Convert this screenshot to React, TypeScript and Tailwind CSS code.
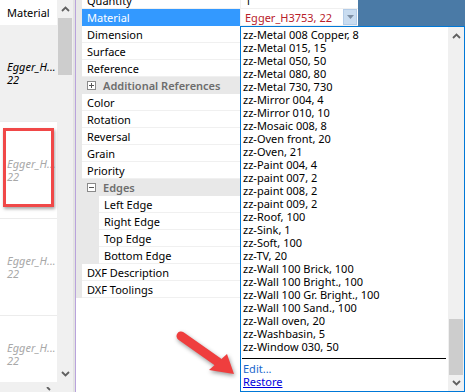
import React from "react";

const items = [
  "zz-Metal 008 Copper, 8",
  "zz-Metal 015, 15",
  "zz-Metal 050, 50",
  "zz-Metal 080, 80",
  "zz-Metal 730, 730",
  "zz-Mirror 004, 4",
  "zz-Mirror 010, 10",
  "zz-Mosaic 008, 8",
  "zz-Oven front, 20",
  "zz-Oven, 21",
  "zz-Paint 004, 4",
  "zz-paint 007, 2",
  "zz-paint 008, 2",
  "zz-paint 009, 2",
  "zz-Roof, 100",
  "zz-Sink, 1",
  "zz-Soft, 100",
  "zz-TV, 20",
  "zz-Wall 100 Brick, 100",
  "zz-Wall 100 Bright., 100",
  "zz-Wall 100 Gr. Bright., 100",
  "zz-Wall 100 Sand., 100",
  "zz-Wall oven, 20",
  "zz-Washbasin, 5",
  "zz-Window 030, 50",
];

type Row =
  | { kind: "item"; label: string; sub?: boolean; selected?: boolean; value?: React.ReactNode }
  | { kind: "cat"; label: string; open: boolean };

const rows: Row[] = [
  { kind: "item", label: "Quantity", value: "1" },
  { kind: "item", label: "Material", selected: true },
  { kind: "item", label: "Dimension" },
  { kind: "item", label: "Surface" },
  { kind: "item", label: "Reference" },
  { kind: "cat", label: "Additional References", open: false },
  { kind: "item", label: "Color" },
  { kind: "item", label: "Rotation" },
  { kind: "item", label: "Reversal" },
  { kind: "item", label: "Grain" },
  { kind: "item", label: "Priority" },
  { kind: "cat", label: "Edges", open: true },
  { kind: "item", label: "Left Edge", sub: true },
  { kind: "item", label: "Right Edge", sub: true },
  { kind: "item", label: "Top Edge", sub: true },
  { kind: "item", label: "Bottom Edge", sub: true },
  { kind: "item", label: "DXF Description" },
  { kind: "item", label: "DXF Toolings" },
];

function ChevronUp() {
  return (
    <svg width="9" height="6" viewBox="0 0 9 6">
      <path d="M1 5 L4.5 1.5 L8 5" fill="none" stroke="#606060" strokeWidth="1.8" />
    </svg>
  );
}
function ChevronDown() {
  return (
    <svg width="9" height="6" viewBox="0 0 9 6">
      <path d="M1 1 L4.5 4.5 L8 1" fill="none" stroke="#606060" strokeWidth="1.8" />
    </svg>
  );
}

function Cell({ h, bg, color, last }: { h: string; bg: string; color: string; last?: boolean }) {
  return (
    <div className={`${h} ${bg} ${last ? "" : "border-b border-[#ececec]"} flex flex-col justify-center pl-[7px] italic ${color} text-[11px] leading-[13px]`}>
      <span>Egger_H...</span>
      <span>22</span>
    </div>
  );
}

function Box({ minus }: { minus: boolean }) {
  return (
    <div className="w-[9px] h-[9px] border border-[#8a8a8a] bg-white flex items-center justify-center relative">
      <div className="w-[5px] h-[1px] bg-[#555]" />
      {!minus && <div className="absolute w-[1px] h-[5px] bg-[#555]" />}
    </div>
  );
}

export default function App() {
  return (
    <div className="relative w-[465px] h-[392px] overflow-hidden flex bg-white font-['Noto_Sans',sans-serif] text-[11px] text-black leading-[13px]">
      {/* Left panel */}
      <div className="w-[73px] h-full flex flex-col bg-[#f0f0f0]">
        <div className="flex flex-1 min-h-0">
          <div className="w-[57px] flex flex-col">
            <div className="h-[25px] shrink-0 bg-white flex items-center pl-[7px] text-[11px]">Material</div>
            <Cell h="h-[97px]" bg="bg-[#f0f0f0]" color="text-black" />
            <Cell h="h-[97px]" bg="bg-white" color="text-[#a8a8a8]" />
            <Cell h="h-[97px]" bg="bg-white" color="text-[#a8a8a8]" />
            <div className="flex-1 bg-white flex flex-col justify-center pl-[7px] italic text-[#a8a8a8] text-[11px] leading-[13px] pt-[10px]">
              <span>Egger_H...</span>
              <span>22</span>
            </div>
          </div>
          <div className="w-[16px] flex flex-col bg-[#f0f0f0]">
            <div className="h-[18px] flex items-center justify-center"><ChevronUp /></div>
            <div className="h-[57px] mx-[1px] bg-[#cdcdcd]" />
            <div className="flex-1" />
            <div className="h-[17px] flex items-center justify-center"><ChevronDown /></div>
          </div>
        </div>
        <div className="h-[10px] shrink-0 bg-[#f0f0f0] flex">
          <div className="w-[57px] flex items-end justify-end pr-[5px]">
            <svg width="6" height="5" viewBox="0 0 6 5">
              <path d="M1 0 L4 3" fill="none" stroke="#606060" strokeWidth="1.8" />
            </svg>
          </div>
        </div>
      </div>
      <div className="w-[2px] h-full bg-[#e3e3e3]" />
      <div className="w-[1px] h-full bg-[#b9a3dc]" />

      {/* Property grid */}
      <div className="w-[282px] h-full flex flex-col bg-white">
        <div className="mt-[-8px] flex flex-col">
          {rows.map((r, i) =>
            r.kind === "cat" ? (
              <div key={i} className="h-[17px] flex items-center bg-[#e8e8e8] border-b border-[#e8e8e8]">
                <div className="w-[11px]" />
                <Box minus={r.open} />
                <span className="ml-[7px] font-semibold text-[#6d6d6d]">{r.label}</span>
              </div>
            ) : (
              <div key={i} className="h-[17px] flex">
                <div className={`${r.sub ? "w-[23px]" : "w-[6px]"} bg-[#e8e8e8]`} />
                <div
                  className={`flex-1 flex items-center pl-[5px] border-b ${
                    r.selected ? "bg-[#3399ff] text-white border-[#3399ff]" : r.sub ? "pl-[4px] border-[#f0f0f0]" : "border-[#f0f0f0]"
                  }`}
                >
                  {r.label}
                </div>
                <div className="w-[118px] flex items-center border-l border-b border-[#f0f0f0] pl-[4px]">
                  {r.selected ? (
                    <div className="flex-1 flex items-center justify-between pr-[1px]">
                      <span className="text-[#b8202a]">Egger_H3753, 22</span>
                      <div className="w-[14px] h-[16px] bg-[#c9dcf0] border border-[#b3cce8] flex items-center justify-center">
                        <svg width="7" height="4" viewBox="0 0 7 4">
                          <path d="M0 0 L7 0 L3.5 4 Z" fill="#7d8ea3" />
                        </svg>
                      </div>
                    </div>
                  ) : (
                    r.value
                  )}
                </div>
              </div>
            )
          )}
        </div>
      </div>

      {/* Form background */}
      <div className="flex-1 h-full bg-[#4a7aa6]" />

      {/* Dropdown list */}
      <div className="absolute left-[240px] top-[26px] w-[225px] h-[366px] border border-[#0078d7] bg-white flex">
        <div className="w-[207px] flex flex-col pt-[1px]">
          {items.map((t) => (
            <div key={t} className="h-[13px] flex items-center pl-[2px] whitespace-nowrap">
              {t}
            </div>
          ))}
          <div className="mt-[5px] ml-[1px] mr-[2px] h-[1px] bg-black shrink-0" />
          <div className="mt-[3px] h-[13px] flex items-center pl-[2px] text-[#1a66cc]">Edit...</div>
          <div className="h-[13px] flex items-center pl-[2px] text-[#0000dd] underline">Restore</div>
        </div>
        <div className="w-[16px] flex flex-col bg-[#f0f0f0]">
          <div className="h-[17px] flex items-center justify-center"><ChevronUp /></div>
          <div className="flex-1" />
          <div className="h-[56px] mx-[1px] bg-[#cdcdcd]" />
          <div className="h-[16px] flex items-center justify-center"><ChevronDown /></div>
        </div>
      </div>

      {/* Annotation: red box */}
      <div className="absolute left-[3px] top-[128px] w-[51px] h-[79px] border-[3px] border-[#f04848] shadow-[1px_2px_3px_rgba(0,0,0,0.35)]" />

      {/* Annotation: red arrow */}
      <svg className="absolute left-0 top-0 drop-shadow-[1px_2px_2px_rgba(0,0,0,0.4)]" width="465" height="392" viewBox="0 0 465 392">
        <line x1="181" y1="336" x2="218" y2="362" stroke="#ef3e3e" strokeWidth="9" strokeLinecap="round" />
        <polygon points="234,374 209,370 227,354" fill="#ef3e3e" />
      </svg>
    </div>
  );
}
